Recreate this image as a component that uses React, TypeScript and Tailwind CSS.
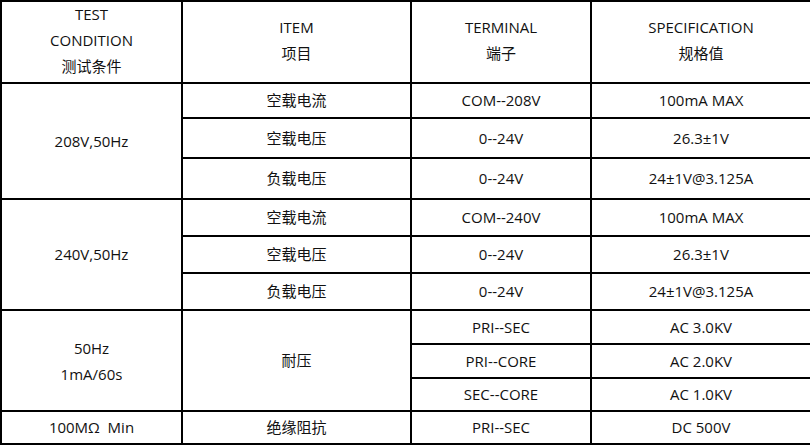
import React from "react";

type Row = { item?: string; itemSpan?: number; terminal: string; spec: string; h: string };

const groups: { cond: React.ReactNode; rows: Row[] }[] = [
  {
    cond: "208V,50Hz",
    rows: [
      { item: "空载电流", terminal: "COM--208V", spec: "100mA MAX", h: "h-[35px]" },
      { item: "空载电压", terminal: "0--24V", spec: "26.3±1V", h: "h-[40px]" },
      { item: "负载电压", terminal: "0--24V", spec: "24±1V@3.125A", h: "h-[41px]" },
    ],
  },
  {
    cond: "240V,50Hz",
    rows: [
      { item: "空载电流", terminal: "COM--240V", spec: "100mA MAX", h: "h-[37px]" },
      { item: "空载电压", terminal: "0--24V", spec: "26.3±1V", h: "h-[37px]" },
      { item: "负载电压", terminal: "0--24V", spec: "24±1V@3.125A", h: "h-[37px]" },
    ],
  },
  {
    cond: (
      <div className="leading-[26px]">
        <div>50Hz</div>
        <div>1mA/60s</div>
      </div>
    ),
    rows: [
      { item: "耐压", itemSpan: 3, terminal: "PRI--SEC", spec: "AC 3.0KV", h: "h-[34px]" },
      { terminal: "PRI--CORE", spec: "AC 2.0KV", h: "h-[34px]" },
      { terminal: "SEC--CORE", spec: "AC 1.0KV", h: "h-[33px]" },
    ],
  },
  {
    cond: "100MΩ  Min",
    rows: [{ item: "绝缘阻抗", terminal: "PRI--SEC", spec: "DC 500V", h: "h-[33px]" }],
  },
];

const td = "border-2 border-black text-center align-middle p-0";

function Head({ lines }: { lines: string[] }) {
  return (
    <td className={`${td} leading-[26px]`}>
      <div className="-mt-[4px]">
        {lines.map((l) => (
          <div key={l}>{l}</div>
        ))}
      </div>
    </td>
  );
}

export default function App() {
  return (
    <div className="w-[810px] h-[445px] bg-white text-[#111] font-['Open_Sans','Noto_Sans_CJK_SC',sans-serif] text-[15px]">
      <table className="w-[810px] table-fixed border-collapse border-2 border-black">
        <colgroup>
          <col className="w-[181px]" />
          <col className="w-[229px]" />
          <col className="w-[180px]" />
          <col className="w-[220px]" />
        </colgroup>
        <tbody>
          <tr className="h-[82px]">
            <Head lines={["TEST", "CONDITION", "测试条件"]} />
            <Head lines={["ITEM", "项目"]} />
            <Head lines={["TERMINAL", "端子"]} />
            <Head lines={["SPECIFICATION", "规格值"]} />
          </tr>
          {groups.map((g, gi) =>
            g.rows.map((r, ri) => (
              <tr key={`${gi}-${ri}`} className={r.h}>
                {ri === 0 && (
                  <td rowSpan={g.rows.length} className={`${td} whitespace-pre`}>
                    {g.cond}
                  </td>
                )}
                {r.item !== undefined && (
                  <td rowSpan={r.itemSpan ?? 1} className={td}>
                    {r.item}
                  </td>
                )}
                <td className={td}>{r.terminal}</td>
                <td className={td}>{r.spec}</td>
              </tr>
            ))
          )}
        </tbody>
      </table>
    </div>
  );
}
